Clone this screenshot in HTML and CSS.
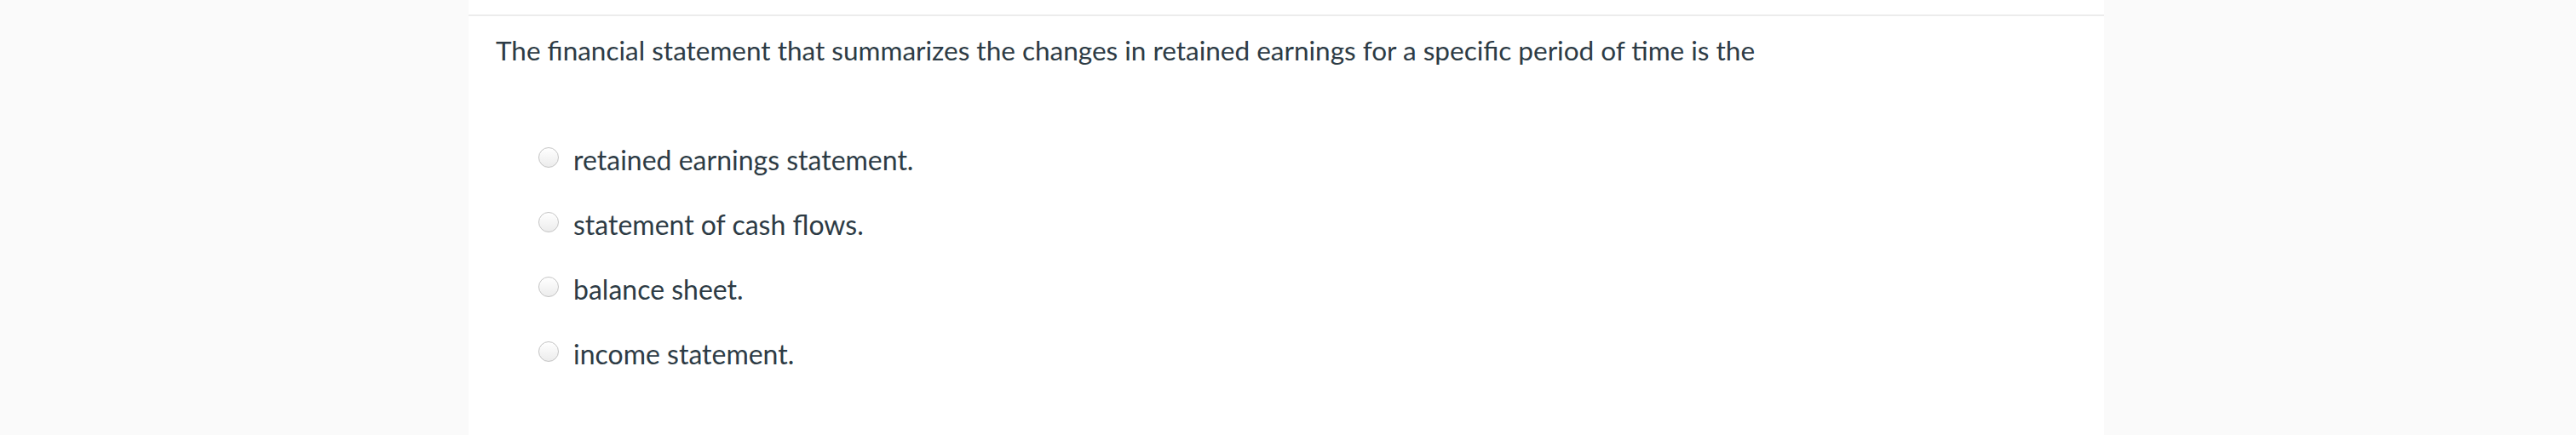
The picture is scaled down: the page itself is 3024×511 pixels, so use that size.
FILE: index.html
```html
<!DOCTYPE html>
<html lang="en">
<head>
<meta charset="utf-8">
<title>Quiz question</title>
<link rel="stylesheet" href="styles.css">
</head>
<body>
<div class="panel">
  <div class="divider"></div>
  <div class="question">The financial statement that summarizes the changes in retained earnings for a specific period of time is the</div>
  <div class="answers">
    <label class="answer"><span class="radio"></span><span class="answer-text">retained earnings statement.</span></label>
    <label class="answer"><span class="radio"></span><span class="answer-text">statement of cash flows.</span></label>
    <label class="answer"><span class="radio"></span><span class="answer-text">balance sheet.</span></label>
    <label class="answer"><span class="radio"></span><span class="answer-text">income statement.</span></label>
  </div>
</div>
</body>
</html>
```
FILE: styles.css
```css
html, body {
  margin: 0;
  padding: 0;
}
body {
  background: #fafafa;
  font-family: Lato, "Open Sans", sans-serif;
  color: #2d3b45;
}
.panel {
  margin-left: 550px;
  width: 1920px;
  height: 511px;
  background: #ffffff;
  padding-top: 17px;
  box-sizing: border-box;
}
.divider {
  height: 2px;
  background: #ececec;
}
.question {
  margin-top: 20px;
  padding-left: 32px;
  font-size: 31.5px;
  line-height: 40px;
}
.answers {
  margin-top: 89px;
  padding-left: 82px;
  display: flex;
  flex-direction: column;
  gap: 36px;
}
.answer {
  display: flex;
  align-items: flex-start;
  gap: 17px;
  font-size: 32px;
  line-height: 40px;
}
.radio {
  flex: none;
  width: 24px;
  height: 24px;
  margin-top: 5px;
  border-radius: 50%;
  border: 1px solid #c4c4c4;
  box-sizing: border-box;
  background: linear-gradient(#ffffff, #ececec);
  box-shadow: inset 0 1px 1px rgba(255,255,255,0.9);
}
```
